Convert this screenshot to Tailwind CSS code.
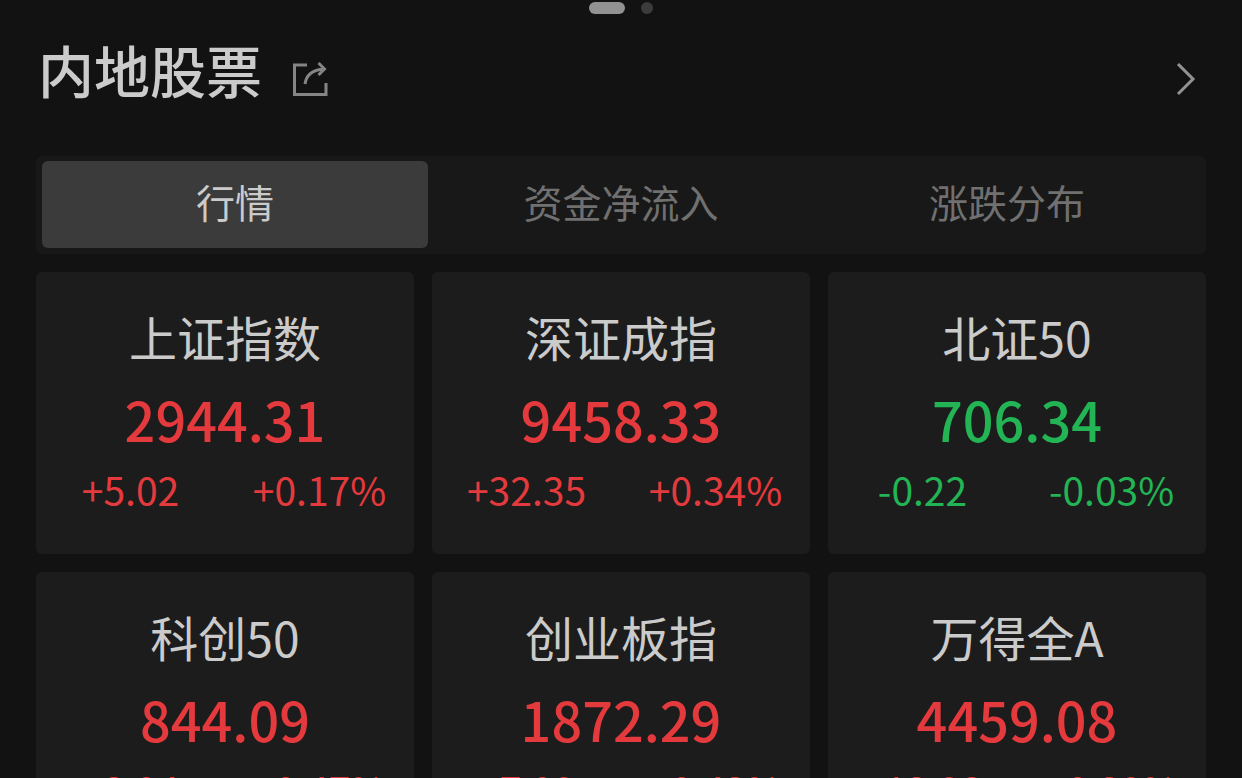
<!DOCTYPE html>
<html lang="zh-CN">
<head>
<meta charset="utf-8">
<meta name="viewport" content="width=device-width, initial-scale=1">
<title>内地股票</title>
<script src="https://cdn.jsdelivr.net/npm/@tailwindcss/browser@4"></script>
</head>
<body class="bg-[#121212] font-['Noto_Sans_CJK_SC',sans-serif] text-[#cbcbcb]">
<main class="flex h-screen flex-col overflow-hidden px-9">
  <div class="flex h-4 shrink-0 items-center justify-center gap-4">
    <span class="h-3 w-9 rounded-full bg-[#929292]"></span>
    <span class="size-3 rounded-full bg-[#3c3c3c]"></span>
  </div>
  <header class="flex h-28 shrink-0 items-center justify-between pr-2 pl-0.5">
    <div class="flex items-center gap-7">
      <h1 class="pb-1.5 text-[56px] leading-[80px] font-medium">内地股票</h1>
      <button type="button" aria-label="分享" class="mt-3 text-[#858585]">
        <svg class="h-10 w-10" viewBox="0 0 40 40" fill="none" stroke="currentColor" stroke-width="3"><path d="M17 7H4.500v29.500h31.500V25"/><path d="M15 26c1-8 7-14 19-15M28.500 5l6 6-6 6"/></svg>
      </button>
    </div>
    <a href="#" aria-label="更多" class="mt-3 text-[#929292]">
      <svg class="h-10 w-6" viewBox="0 0 24 40" fill="none" stroke="currentColor" stroke-width="3"><path d="M4 6l15 15L4 36"/></svg>
    </a>
  </header>
  <nav class="mt-7 grid shrink-0 grid-cols-3 rounded-md bg-[#181818] px-1.5 pt-[5px] pb-1.5 text-[39px] leading-[81px] text-[#707070]">
    <button type="button" class="rounded-md bg-[#3b3b3b] pb-1.5 text-[#cbcbcb]">行情</button>
    <button type="button" class="pb-1.5">资金净流入</button>
    <button type="button" class="pb-1.5">涨跌分布</button>
  </nav>
  <section class="mt-[18px] grid shrink-0 grid-cols-3 gap-[18px] text-center text-[#e53a3d]">
    <article class="rounded-md bg-[#1c1c1c] pt-[34px] pb-9">
      <h2 class="text-[48px] leading-[60px] text-[#cbcbcb]">上证指数</h2>
      <p class="mt-3 text-[54px] leading-[82px] font-medium">2944.31</p>
      <div class="grid grid-cols-2 text-[39px] leading-[58px]"><span>+5.02</span><span>+0.17%</span></div>
    </article>
    <article class="rounded-md bg-[#1c1c1c] pt-[34px] pb-9">
      <h2 class="text-[48px] leading-[60px] text-[#cbcbcb]">深证成指</h2>
      <p class="mt-3 text-[54px] leading-[82px] font-medium">9458.33</p>
      <div class="grid grid-cols-2 text-[39px] leading-[58px]"><span>+32.35</span><span>+0.34%</span></div>
    </article>
    <article class="rounded-md bg-[#1c1c1c] pt-[34px] pb-9 text-[#22b455]">
      <h2 class="text-[48px] leading-[60px] text-[#cbcbcb]">北证50</h2>
      <p class="mt-3 text-[54px] leading-[82px] font-medium">706.34</p>
      <div class="grid grid-cols-2 text-[39px] leading-[58px]"><span>-0.22</span><span>-0.03%</span></div>
    </article>
    <article class="rounded-md bg-[#1c1c1c] pt-[34px] pb-9">
      <h2 class="text-[48px] leading-[60px] text-[#cbcbcb]">科创50</h2>
      <p class="mt-3 text-[54px] leading-[82px] font-medium">844.09</p>
      <div class="grid grid-cols-2 text-[39px] leading-[58px]"><span>+3.94</span><span>+0.47%</span></div>
    </article>
    <article class="rounded-md bg-[#1c1c1c] pt-[34px] pb-9">
      <h2 class="text-[48px] leading-[60px] text-[#cbcbcb]">创业板指</h2>
      <p class="mt-3 text-[54px] leading-[82px] font-medium">1872.29</p>
      <div class="grid grid-cols-2 text-[39px] leading-[58px]"><span>+7.99</span><span>+0.43%</span></div>
    </article>
    <article class="rounded-md bg-[#1c1c1c] pt-[34px] pb-9">
      <h2 class="text-[48px] leading-[60px] text-[#cbcbcb]">万得全A</h2>
      <p class="mt-3 text-[54px] leading-[82px] font-medium">4459.08</p>
      <div class="grid grid-cols-2 text-[39px] leading-[58px]"><span>+12.98</span><span>+0.29%</span></div>
    </article>
  </section>
</main>
</body>
</html>
